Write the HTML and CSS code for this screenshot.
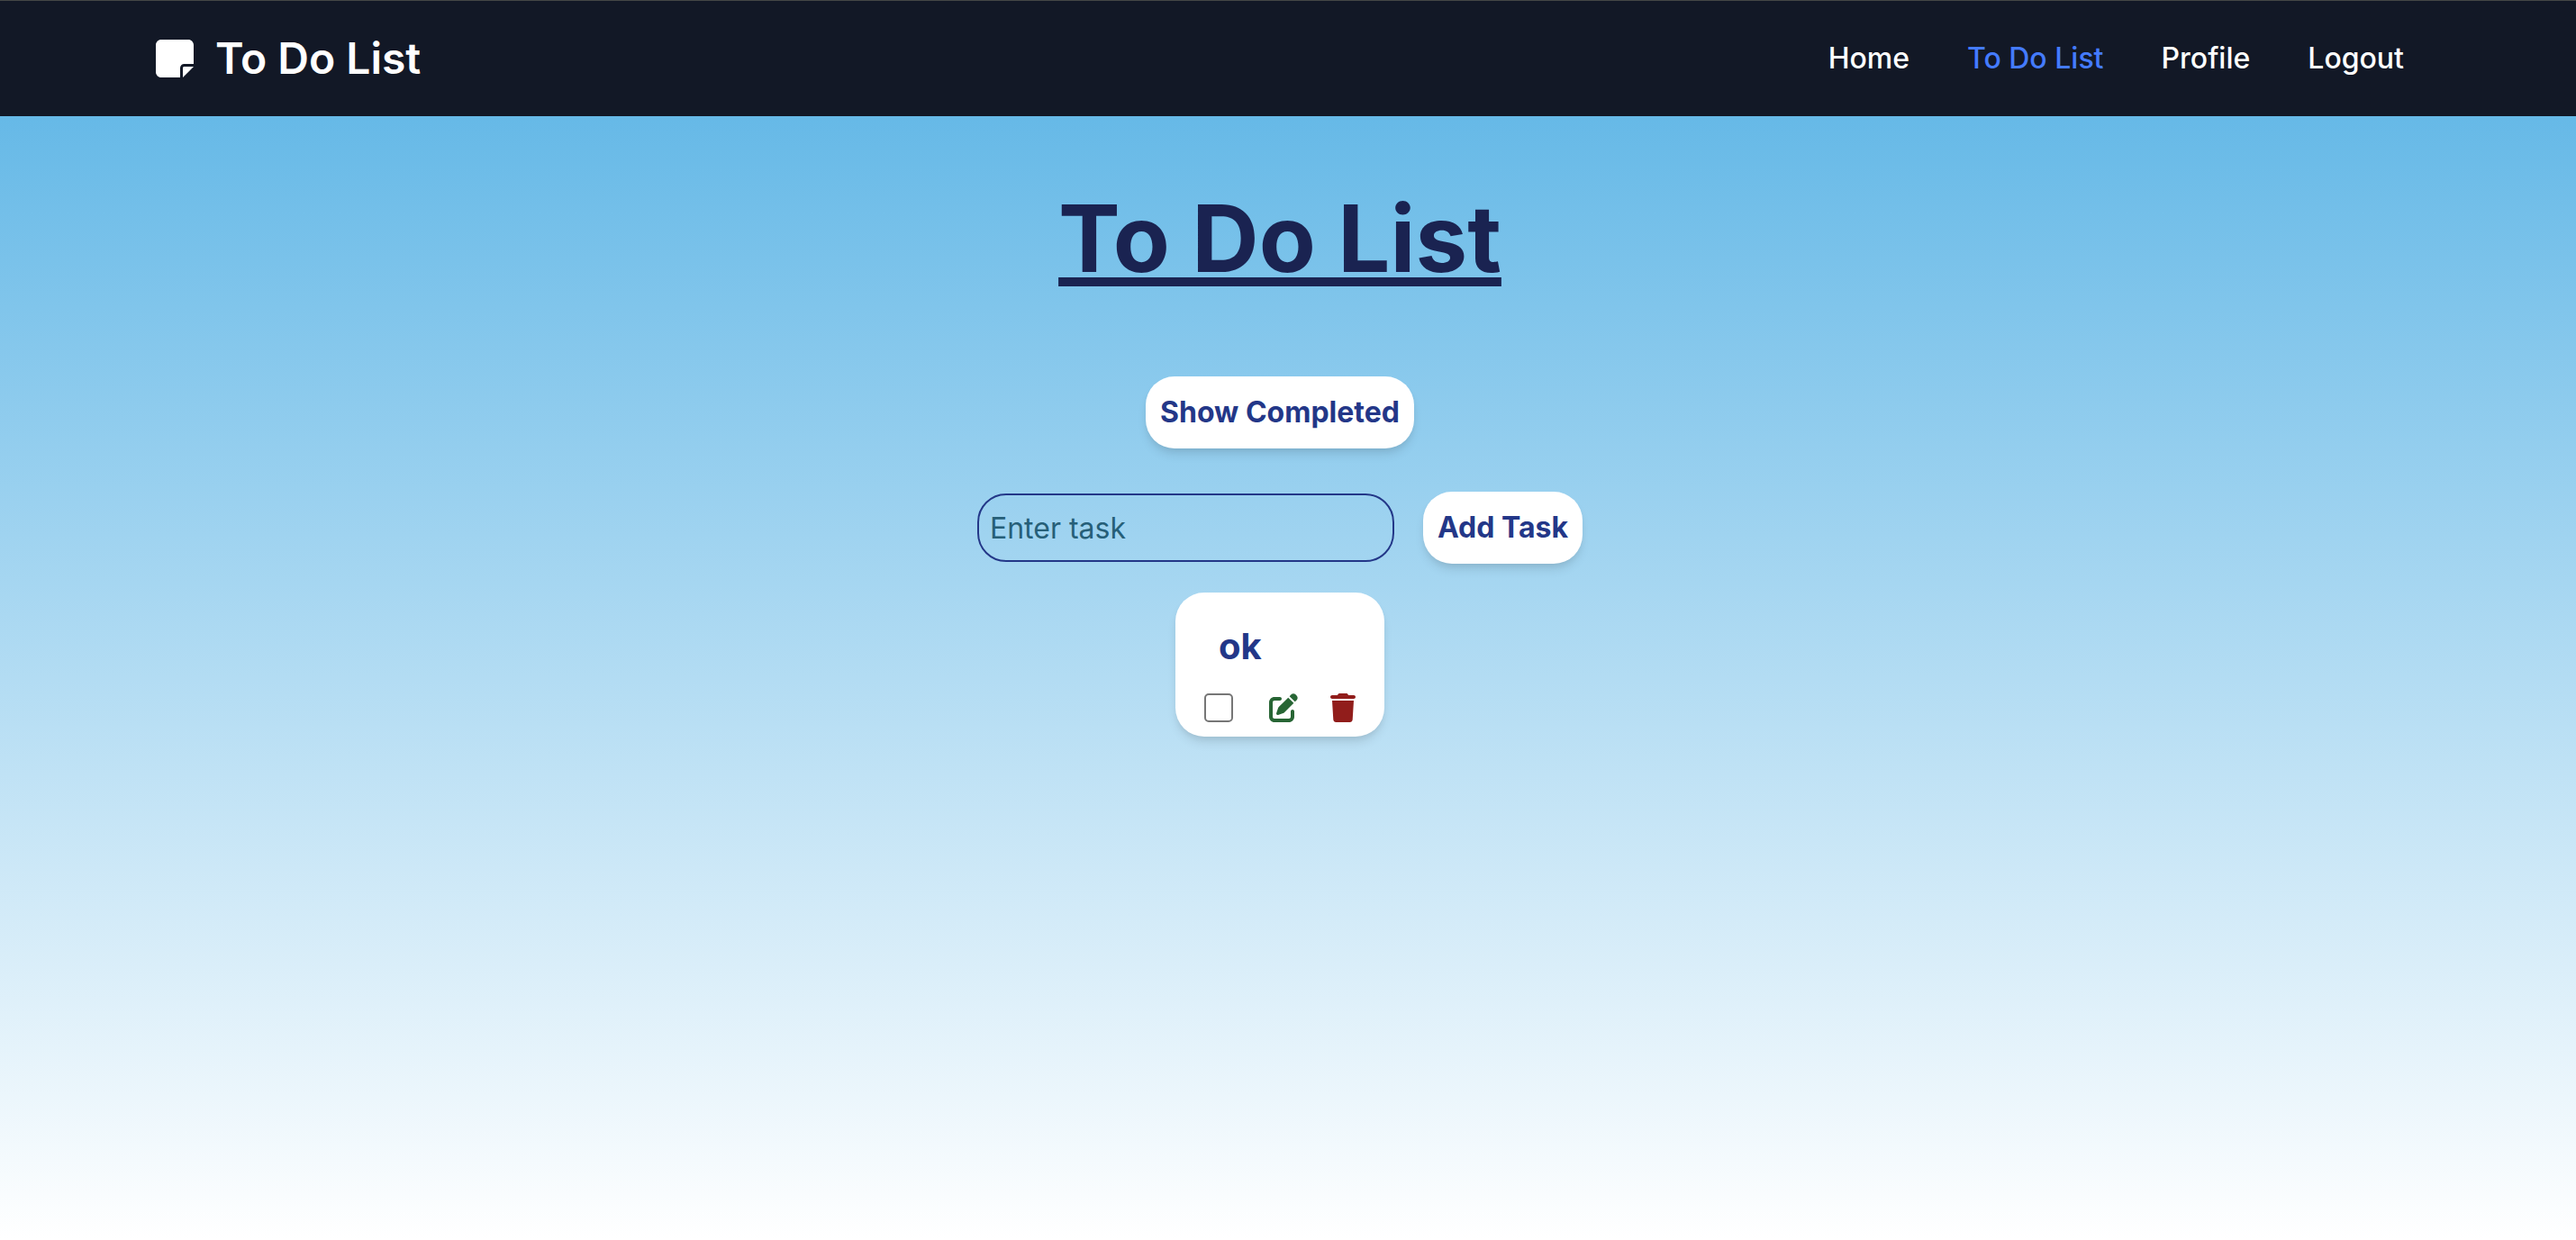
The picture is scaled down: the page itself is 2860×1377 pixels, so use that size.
FILE: index.html
```html
<!DOCTYPE html>
<html lang="en">
<head>
<meta charset="utf-8">
<meta name="viewport" content="width=device-width, initial-scale=1">
<title>To Do List</title>
<link rel="stylesheet" href="styles.css">
</head>
<body>
<header class="navbar">
  <a class="brand" href="#">
    <svg class="brand-icon" viewBox="0 32 448 448" aria-hidden="true"><path d="M64 32C28.700 32 0 60.700 0 96V416c0 35.300 28.700 64 64 64H288V368c0-26.500 21.500-48 48-48H448V96c0-35.300-28.700-64-64-64H64zM448 352H336c-8.800 0-16 7.200-16 16V480l32-32 64-64 32-32z"/></svg>
    <span>To Do List</span>
  </a>
  <nav class="nav-links">
    <a href="#">Home</a>
    <a class="active" href="#">To Do List</a>
    <a href="#">Profile</a>
    <a href="#">Logout</a>
  </nav>
</header>
<main class="page">
  <h1 class="title">To Do List</h1>
  <button class="button" type="button">Show Completed</button>
  <form class="task-form">
    <input class="task-input" type="text" placeholder="Enter task" aria-label="Enter task">
    <button class="button" type="button">Add Task</button>
  </form>
  <article class="card">
    <h2 class="card-title" id="task-name">ok</h2>
    <div class="card-actions">
      <input class="check" type="checkbox" aria-labelledby="task-name">
      <button class="icon-button edit" type="button" aria-label="Edit">
        <svg width="32" height="32" viewBox="0 0 512 512"><path d="M471.600 21.700c-21.900-21.900-57.300-21.900-79.200 0L362.300 51.700l97.900 97.900 30.100-30.100c21.900-21.900 21.900-57.300 0-79.200L471.600 21.700zm-299.200 220c-6.100 6.100-10.800 13.600-13.500 21.900l-29.600 88.800c-2.900 8.600-.6 18.100 5.800 24.600s15.900 8.700 24.600 5.800l88.800-29.600c8.200-2.700 15.700-7.400 21.900-13.500L437.700 172.300 339.700 74.300 172.400 241.700zM96 64C43 64 0 107 0 160V416c0 53 43 96 96 96H352c53 0 96-43 96-96V320c0-17.700-14.300-32-32-32s-32 14.300-32 32v96c0 17.700-14.300 32-32 32H96c-17.700 0-32-14.300-32-32V160c0-17.700 14.300-32 32-32h96c17.700 0 32-14.300 32-32s-14.300-32-32-32H96z"/></svg>
      </button>
      <button class="icon-button delete" type="button" aria-label="Delete">
        <svg width="28" height="32" viewBox="0 0 448 512"><path d="M135.200 17.700L128 32H32C14.300 32 0 46.300 0 64S14.300 96 32 96H416c17.700 0 32-14.300 32-32s-14.300-32-32-32H320l-7.200-14.300C307.400 6.800 296.300 0 284.200 0H163.800c-12.100 0-23.200 6.800-28.600 17.700zM416 128H32L53.200 467c1.600 25.300 22.600 45 47.900 45H346.900c25.300 0 46.300-19.700 47.900-45L416 128z"/></svg>
      </button>
    </div>
  </article>
</main>
</body>
</html>
```
FILE: styles.css
```css
* {
  box-sizing: border-box;
}

body {
  margin: 0;
  min-height: 100vh;
  display: flex;
  flex-direction: column;
  font-family: Inter, "Liberation Sans", sans-serif;
  font-size: 32px;
  line-height: 48px;
}

button,
input {
  font: inherit;
  margin: 0;
}

.navbar {
  display: flex;
  justify-content: space-between;
  align-items: center;
  padding: 32px 191px 32px 173px;
  background: #121826;
  border-top: 1px solid #444746;
  color: #fff;
}

.brand {
  display: flex;
  align-items: center;
  gap: 24px;
  font-size: 48px;
  line-height: 64px;
  font-weight: 600;
  color: inherit;
  text-decoration: none;
}

.brand-icon {
  width: 42px;
  height: 42px;
  fill: currentColor;
}

.nav-links {
  display: flex;
  gap: 64px;
  font-weight: 500;
}

.nav-links a {
  color: inherit;
  text-decoration: none;
}

.nav-links .active {
  color: #447bff;
}

.page {
  flex: 1;
  display: flex;
  flex-direction: column;
  align-items: center;
  padding: 80px 18px 80px 0;
  background: linear-gradient(#66b9e7, #fff);
}

.title {
  margin: 0 0 97px;
  font-size: 103px;
  line-height: 112px;
  font-weight: 700;
  color: #1a2351;
  text-decoration: underline;
}

.button {
  height: 80px;
  padding: 0 16px;
  border: 0;
  border-radius: 32px;
  background: #fff;
  color: #233788;
  font-weight: 700;
  box-shadow: 0 8px 12px -2px rgba(0, 0, 0, 0.1), 0 4px 8px -4px rgba(0, 0, 0, 0.1);
}

.task-form {
  display: flex;
  align-items: center;
  gap: 32px;
  margin: 48px 0 32px;
}

.task-input {
  width: 463px;
  height: 76px;
  padding: 0 12px;
  border: 2px solid #233788;
  border-radius: 32px;
  background: transparent;
  color: #233788;
}

.task-input::placeholder {
  color: #265f78;
  opacity: 1;
}

.card {
  width: 232px;
  padding: 32px 32px 16px;
  border-radius: 32px;
  background: #fff;
  box-shadow: 0 8px 12px -2px rgba(0, 0, 0, 0.1), 0 4px 8px -4px rgba(0, 0, 0, 0.1);
}

.card-title {
  margin: 0 0 24px;
  padding-left: 16px;
  font-size: 40px;
  line-height: 56px;
  font-weight: 700;
  color: #233788;
}

.card-actions {
  display: flex;
  align-items: center;
  gap: 36px;
}

.check {
  appearance: none;
  width: 32px;
  height: 32px;
  margin-right: 4px;
  border: 2px solid #767676;
  border-radius: 5px;
  background: #fff;
}

.icon-button {
  display: flex;
  padding: 0;
  border: 0;
  background: none;
}

.icon-button svg {
  fill: currentColor;
}

.edit {
  color: #276534;
}

.delete {
  color: #911d1b;
}
```
